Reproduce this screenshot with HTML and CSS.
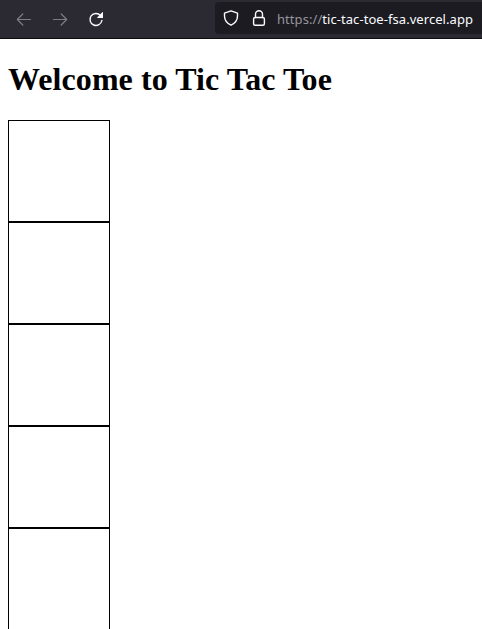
FILE: index.html
```html
<!DOCTYPE html>
<html lang="en">
<head>
<meta charset="utf-8">
<title>Tic Tac Toe</title>
<link rel="stylesheet" href="styles.css">
</head>
<body>
<header class="toolbar">
  <nav class="nav">
    <svg class="icon dim" viewBox="0 0 16 16"><path d="M14.500 8.500h-13M6.800 3 1.300 8.500l5.500 5.500"/></svg>
    <svg class="icon dim" viewBox="0 0 16 16"><path d="M1.500 8.500h13M9.200 3l5.500 5.500-5.500 5.500"/></svg>
    <svg class="icon" viewBox="0 0 16 16"><path d="M12.500 4.500A6 6 0 1 0 13.900 9.500"/><path class="solid" d="M14.300 1.300q.7-.6.700.3v5.400H9.600q-.9 0-.2-.7z"/></svg>
  </nav>
  <div class="address">
    <svg class="icon" viewBox="0 0 16 16"><path d="M8 .8 14.500 3.200v2.800c0 4-2.500 7.200-6.500 9.200C4 13.200 1.500 10 1.500 6V3.200z"/></svg>
    <svg class="icon" viewBox="0 0 16 16"><rect x="2.600" y="7.500" width="10.800" height="7.800" rx="1.500"/><path d="M4.500 7.500V4.200a3.500 3.500 0 0 1 7 0v3.300"/></svg>
    <span class="url"><span class="scheme">https://</span>tic-tac-toe-fsa.vercel.app</span>
  </div>
</header>
<main class="page">
  <h1>Welcome to Tic Tac Toe</h1>
  <div class="board">
    <div class="cell"></div><div class="cell"></div><div class="cell"></div><div class="cell"></div><div class="cell"></div>
  </div>
</main>
</body>
</html>
```
FILE: styles.css
```css
html { overflow: hidden; }
body { margin: 0; height: 629px; overflow: hidden; background: #fff; }
.toolbar { display: flex; justify-content: space-between; box-sizing: border-box; height: 39px; background: #2b2a33; border-bottom: 1px solid #0c0c0d; }
.nav { display: flex; align-items: center; gap: 20px; padding-left: 16px; }
.icon { flex: none; width: 16px; height: 16px; fill: none; stroke: #fbfbfe; stroke-width: 1.400; stroke-linecap: round; stroke-linejoin: round; }
.dim { stroke: #7d7c83; stroke-width: 1.200; }
.solid { fill: #fbfbfe; stroke: none; }
.address { display: flex; align-items: center; gap: 12px; box-sizing: border-box; width: 267px; height: 32px; margin-top: 2px; padding-left: 8px; background: #1c1b22; border-radius: 4px 0 0 4px; }
.url { margin-left: -2px; padding-top: 2px; font: 13px "Noto Sans", sans-serif; letter-spacing: .06px; color: #fbfbfe; white-space: nowrap; }
.scheme { color: #96959b; }
.page { padding: 0 8px; }
h1 { margin: 0; padding-top: 22px; height: 59px; font: bold 32px/37px "Liberation Serif", serif; letter-spacing: .07px; color: #000; }
.cell { width: 100px; height: 100px; border: 1px solid #000; }
```
